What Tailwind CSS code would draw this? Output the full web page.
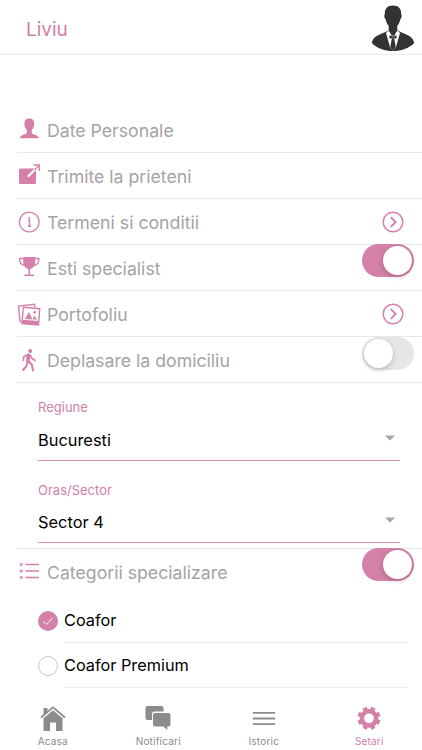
<!DOCTYPE html>
<html lang="ro">
<head>
  <meta charset="UTF-8">
  <meta name="viewport" content="width=device-width, initial-scale=1.0">
  <title>Setari</title>
  <script src="https://cdn.jsdelivr.net/npm/@tailwindcss/browser@4"></script>
</head>
<body class="bg-white font-['Inter','Noto_Sans',sans-serif] text-black">
  <div class="w-[422px] h-[750px] flex flex-col overflow-hidden">
    <!-- Header -->
    <header class="h-[55px] shrink-0 border-b border-[#ebebeb] flex items-center justify-between pl-[26px] pr-[7px]">
      <h1 class="text-[19px] leading-6 text-[#d4809f] mt-[5px]">Liviu</h1>
      <svg class="w-[44px] h-[48px] mt-[2px]" viewBox="0 0 44 48">
        <path fill="#333" d="M22 1.500c-5.500 0-8.600 3.300-8.200 9-1 .6-.4 3.800 1 5 .5 3 1.600 5 2.900 6.200v4.500L14.500 28C8 31 2 32 .8 39 6 44.500 14 47 22 47S38 44.500 43.200 39C42 32 36 31 29.500 28l-3.200-1.800v-4.500c1.300-1.200 2.400-3.200 2.900-6.200 1.400-1.200 2-4.400 1-5 .4-5.700-2.700-9-8.200-9z"/>
        <path fill="#fff" d="M17.500 26.500L15 29l4 14 3 3.500 3-3.500 4-14-2.500-2.500L22 32z"/>
        <path fill="#333" d="M18 26h8l-2.500 5.500h-3zM18.500 31.300l3.500 1.200 3.500-1.200v3.400L22 33.700l-3.500 1zM20.800 34.300h2.400L24.700 43 22 46.500 19.300 43z"/>
      </svg>
    </header>

    <main class="flex-1 pt-[52px] min-h-0">
      <!-- Setari -->
      <ul class="pl-[17px] text-[17.7px] text-[#a5a3a4]">
        <li class="h-[46px] border-b border-[#e9e9e9] flex items-center gap-[6px]">
          <svg class="w-6 h-6 shrink-0 mb-[2px]" viewBox="0 0 24 24" fill="#d480a8"><path d="M12.300 1.500c-3.300 0-5.100 2-4.900 5.300.1 2.800 1 4.800 2.400 6.200v3c0 1.300-6.300 1.700-7 5.200h19c-.7-3.500-7-3.900-7-5.200v-3c1.400-1.400 2.300-3.400 2.400-6.200.2-3.300-1.600-5.300-4.900-5.300z"/></svg>
          <span class="mt-[3px]">Date Personale</span>
        </li>
        <li class="h-[46px] border-b border-[#e9e9e9] flex items-center gap-[6px]">
          <svg class="w-6 h-6 shrink-0 mb-[2px]" viewBox="0 0 24 24"><rect x="2" y="5.500" width="17" height="15.500" rx="1.500" fill="#d480a8"/><path d="M10.800 13.700L19 5.500" stroke="#fff" stroke-width="2"/><path d="M17.800 6.800L22 2.500M16.500 2H22.300V8" fill="none" stroke="#d480a8" stroke-width="1.300"/></svg>
          <span class="mt-[3px]">Trimite la prieteni</span>
        </li>
        <li class="h-[46px] border-b border-[#e9e9e9] flex items-center gap-[6px]">
          <svg class="w-6 h-6 shrink-0" viewBox="0 0 24 24" fill="none" stroke="#d480a8"><circle cx="12.300" cy="12" r="9.900" stroke-width="1.300"/><path d="M11 10.300H12.500V16.300M10.900 16.300H14" stroke-width="1.400"/><circle cx="12.300" cy="7.900" r="1" fill="#d480a8" stroke="none"/></svg>
          <span class="mt-[3px]">Termeni si conditii</span>
          <svg class="w-[22px] h-[22px] ml-auto mr-[18px]" viewBox="0 0 22 22" fill="none" stroke="#d480a8"><circle cx="11" cy="11" r="9.800" stroke-width="1.500"/><path d="M8.800 6.200L13.600 11 8.800 15.800" stroke-width="1.900"/></svg>
        </li>
        <li class="h-[46px] border-b border-[#e9e9e9] flex items-center gap-[6px]">
          <svg class="w-6 h-6 shrink-0 mb-[2px]" viewBox="0 0 24 24"><path d="M6.300 2h12v5c0 4-2.500 6.300-5.300 7.200v5.300h4V21H7.500v-1.500h4v-5.300C8.800 13.300 6.300 11 6.300 7z" fill="#d480a8"/><path d="M6.500 3.500H2.500c0 4 1.500 6.500 5.500 7M18 3.500h4c0 4-1.500 6.500-5.500 7" fill="none" stroke="#d480a8" stroke-width="1.300"/></svg>
          <span class="mt-[3px]">Esti specialist</span>
          <div class="w-[52px] h-[33px] rounded-full bg-[#d480a8] ml-auto mr-2 self-start -mt-px p-[2px] flex justify-end"><div class="w-[29px] h-[29px] rounded-full bg-white shadow-[0_2px_5px_rgba(0,0,0,0.2)]"></div></div>
        </li>
        <li class="h-[46px] border-b border-[#e9e9e9] flex items-center gap-[6px]">
          <svg class="w-6 h-6 shrink-0" viewBox="0 0 24 24"><path d="M6 20L3 19.500 1.500 4 17.500 2.300 18 5.500" fill="none" stroke="#d480a8" stroke-width="1.400"/><path d="M6.300 5.200L22.700 6.700 21.500 23 5 21.500z" fill="none" stroke="#d480a8" stroke-width="1.400"/><path d="M5.400 17.700L21.800 18.900 21.500 23 5 21.500zM8 17L12 10 15.500 17.500zM15.500 17.300L17.500 13.500 20 17.700z" fill="#d480a8"/><circle cx="17.700" cy="10.300" r="1.300" fill="#d480a8"/></svg>
          <span class="mt-[3px]">Portofoliu</span>
          <svg class="w-[22px] h-[22px] ml-auto mr-[18px]" viewBox="0 0 22 22" fill="none" stroke="#d480a8"><circle cx="11" cy="11" r="9.800" stroke-width="1.500"/><path d="M8.800 6.200L13.600 11 8.800 15.800" stroke-width="1.900"/></svg>
        </li>
        <li class="h-[46px] border-b border-[#e9e9e9] flex items-center gap-[6px]">
          <svg class="w-6 h-6 shrink-0" viewBox="0 0 24 24" fill="none" stroke="#d480a8" stroke-linecap="round" stroke-linejoin="round"><circle cx="13.200" cy="3" r="2" fill="#d480a8" stroke="none"/><path d="M11.500 7.200L10.800 13.500" stroke-width="3.500"/><path d="M10.500 6.500L6.500 9.200V12.500M13 7L15 10.500 18 12.500" stroke-width="1.600"/><path d="M10.500 14.500L9.200 18.500 6 22M12 13.500L15 17 16 22.500" stroke-width="2"/></svg>
          <span class="mt-[3px]">Deplasare la domiciliu</span>
          <div class="w-[52px] h-[33px] rounded-full bg-[#e6e6e6] ml-auto mr-2 self-start p-[2px] flex"><div class="w-[29px] h-[29px] rounded-full bg-white shadow-[0_2px_5px_rgba(0,0,0,0.2)]"></div></div>
        </li>
      </ul>

      <!-- Locatie -->
      <div class="pl-[38px] pr-[22px] h-[165px]">
        <div class="h-[78px] border-b border-[#d98fae] flex flex-col pt-[15px]">
          <label class="text-[13px] leading-[18px] text-[#d480a8]">Regiune</label>
          <div class="flex items-center justify-between mt-[11px] pr-[5px]">
            <span class="text-[16.400px] leading-[26px]">Bucuresti</span>
            <svg class="w-[10px] h-[6px] mb-[5px]" viewBox="0 0 10 6"><path d="M0 .5h10L5 5.500z" fill="#a5a5a5"/></svg>
          </div>
        </div>
        <div class="h-[82px] border-b border-[#d98fae] flex flex-col pt-[20px]">
          <label class="text-[13px] leading-[18px] text-[#d480a8]">Oras/Sector</label>
          <div class="flex items-center justify-between mt-[10px] pr-[5px]">
            <span class="text-[16.400px] leading-[26px]">Sector 4</span>
            <svg class="w-[10px] h-[6px] mb-[5px]" viewBox="0 0 10 6"><path d="M0 .5h10L5 5.500z" fill="#a5a5a5"/></svg>
          </div>
        </div>
      </div>

      <!-- Categorii -->
      <div class="ml-[17px] h-[50px] border-t border-[#e9e9e9] flex items-center gap-[6px] text-[17.7px] text-[#a5a3a4]">
        <svg class="w-6 h-6 shrink-0 mb-[5px]" viewBox="0 0 24 24" stroke="#d480a8" stroke-width="1.500"><path d="M8.500 5.500H22M8.500 12H22M8.500 18.500H22"/><path d="M3 5.500h2.500M3 12h2.500M3 18.500h2.500" stroke-width="2.300"/></svg>
        <span>Categorii specializare</span>
        <div class="w-[52px] h-[33px] rounded-full bg-[#d480a8] ml-auto mr-2 self-start -mt-px p-[2px] flex justify-end"><div class="w-[29px] h-[29px] rounded-full bg-white shadow-[0_2px_5px_rgba(0,0,0,0.2)]"></div></div>
      </div>
      <ul class="pl-[38px] pr-[14px] text-[16.300px]">
        <li class="h-[45px] flex items-center gap-[6px]">
          <svg class="w-5 h-5 shrink-0" viewBox="0 0 20 20"><circle cx="10" cy="10" r="10" fill="#d480a8"/><path d="M5.500 10.500l3 3 6-6.500" fill="none" stroke="#fff" stroke-width="1"/></svg>
          <span class="flex-1 h-full border-b border-[#ebebeb] flex items-center">Coafor</span>
        </li>
        <li class="h-[45px] flex items-center gap-[6px]">
          <span class="w-5 h-5 shrink-0 rounded-full border border-[#c8c7cc]"></span>
          <span class="flex-1 h-full border-b border-[#ebebeb] flex items-center">Coafor Premium</span>
        </li>
      </ul>
    </main>

    <!-- Tab bar -->
    <nav class="h-[62px] shrink-0 grid grid-cols-4 text-[10px] leading-3 tracking-[0.2px] text-[#8c8c8c] pt-[17px]">
      <a class="flex flex-col items-center gap-[4px]">
        <svg class="w-[26px] h-[26px]" viewBox="0 0 26 26"><path d="M3.500 3h4v4l-4 3.500z" fill="#8c8c8c"/><path d="M1 12.500L13 2.300 25 12.500" fill="none" stroke="#8c8c8c" stroke-width="1.700"/><path d="M13 5.300l9.500 8V26H16v-8.500h-6V26H3.500V13.300z" fill="#8c8c8c"/></svg>
        <span>Acasa</span>
      </a>
      <a class="flex flex-col items-center gap-[4px]">
        <svg class="w-[26px] h-[26px]" viewBox="0 0 26 26" fill="#8c8c8c"><path d="M2.500 1h14a2 2 0 0 1 2 2v3.500h-9a2.500 2.500 0 0 0-2.500 2.500v6H2.500a2 2 0 0 1-2-2V3a2 2 0 0 1 2-2zM10 8h13.500a2 2 0 0 1 2 2v9.500a2 2 0 0 1-2 2h-1.200V25l-4-3.500H10a2 2 0 0 1-2-2V10a2 2 0 0 1 2-2z"/></svg>
        <span>Notificari</span>
      </a>
      <a class="flex flex-col items-center gap-[4px]">
        <svg class="w-[26px] h-[26px]" viewBox="0 0 26 26" stroke="#8c8c8c" stroke-width="1.800" stroke-linecap="round"><path d="M2.500 7.800h21M2.500 13.500h21M2.500 19.200h21"/></svg>
        <span>Istoric</span>
      </a>
      <a class="flex flex-col items-center gap-[4px] text-[#d480a8]">
        <svg class="w-[26px] h-[26px]" viewBox="0 0 26 26"><g transform="translate(13 13.300)" fill="none" stroke="#d480a8" stroke-width="4.500"><circle r="7.100"/><path d="M0-11.500V-8M0 8v3.500M-11.500 0H-8M8 0h3.500" transform="rotate(22.500)"/><path d="M0-11.500V-8M0 8v3.500M-11.500 0H-8M8 0h3.500" transform="rotate(67.500)"/></g></svg>
        <span>Setari</span>
      </a>
    </nav>
  </div>
</body>
</html>
